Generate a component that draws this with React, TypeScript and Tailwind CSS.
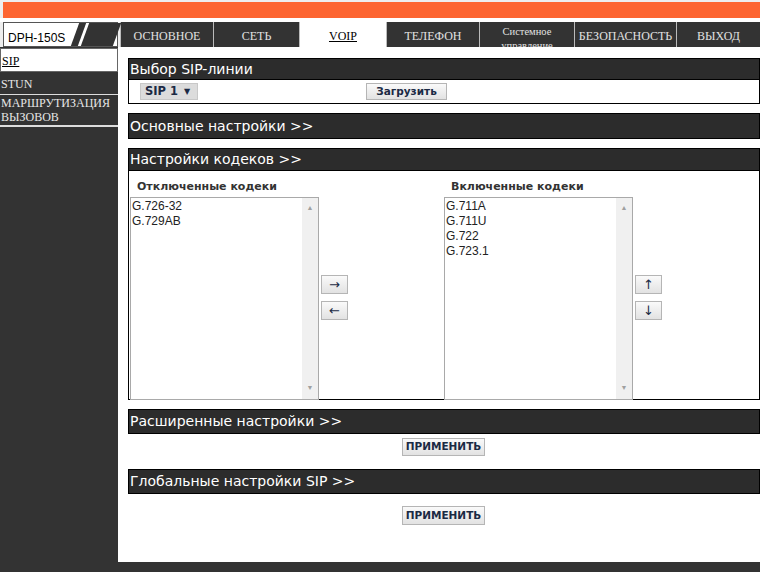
import React from "react";

const serif = "font-['Liberation_Serif',serif]";
const verdana = "font-['DejaVu_Sans',sans-serif]";
const arial = "font-['Liberation_Sans',Arial,sans-serif]";

const tabs = [
  { label: "ОСНОВНОЕ", w: "w-[93px]" },
  { label: "СЕТЬ", w: "w-[86px]" },
  { label: "VOIP", w: "w-[87px]", active: true },
  { label: "ТЕЛЕФОН", w: "w-[93px]" },
  { label: "Системное управление", w: "w-[95px]", small: true },
  { label: "БЕЗОПАСНОСТЬ", w: "w-[102px]" },
  { label: "ВЫХОД", w: "flex-1" },
];

function Header({ title, h = "h-[23px]" }: { title: string; h?: string }) {
  return (
    <div className={`${h} flex items-center border border-black bg-[#2c2c2c] pl-[1px] text-[14px] text-white ${verdana}`}>
      {title}
    </div>
  );
}

function GrayButton({ children, className = "" }: { children: React.ReactNode; className?: string }) {
  return (
    <button
      className={`flex items-center justify-center border border-[#b5b5b5] bg-gradient-to-b from-[#fafafa] to-[#e2e2e2] text-[10.5px] font-bold text-[#1b2a44] ${verdana} ${className}`}
    >
      {children}
    </button>
  );
}

function ListBox({ items }: { items: string[] }) {
  return (
    <div className="flex h-[203px] w-[189px] border border-[#a9a9a9] bg-white">
      <div className={`flex-1 pl-[1px] pt-[1px] text-[12px] leading-[15px] text-[#222] ${arial}`}>
        {items.map((c) => (
          <div key={c}>{c}</div>
        ))}
      </div>
      <div className="flex w-[16px] flex-col items-center justify-between bg-[#f0f0f0] py-[5px] text-[7px] text-[#a0a0a0]">
        <span>▲</span>
        <span>▼</span>
      </div>
    </div>
  );
}

function ArrowPair({ a, b }: { a: string; b: string }) {
  return (
    <div className="flex flex-col gap-[7px] pt-[104px]">
      <GrayButton className="h-[19px] w-[27px] !text-[13px] !font-normal">{a}</GrayButton>
      <GrayButton className="h-[19px] w-[27px] !text-[13px] !font-normal">{b}</GrayButton>
    </div>
  );
}

export default function App() {
  return (
    <div className="relative flex h-[572px] w-[760px] flex-col overflow-hidden bg-[#eeeeee]">
      <div className="ml-[3px] mt-[2px] h-[16px] bg-[#fd6531]" />
      <div className="h-[4px] bg-white" />
      <div className="flex h-[25px]">
        <div className="ml-[3px] flex w-[115px] border border-[#555] bg-white">
          <span className={`pl-[4px] pt-[6px] text-[12px] text-black ${arial}`}>DPH-150S</span>
          <div className="ml-[10px] w-[7px] -skew-x-[20deg] bg-[#333]" />
          <div className="ml-[3px] flex-1 -skew-x-[20deg] bg-[#333]" />
        </div>
        <div className="ml-[2px] flex flex-1">
          {tabs.map((t) => (
            <div
              key={t.label}
              className={`${t.w} flex items-center justify-center border-l border-[#bbb] ${serif} ${
                t.active ? "bg-white text-black underline" : "bg-[#333] text-[#e2e2e2]"
              } ${t.small ? "h-[25px] overflow-hidden pt-[9px] text-center text-[10.5px] leading-[14px]" : "pt-[2px] text-[12px]"}`}
            >
              {t.label}
            </div>
          ))}
        </div>
      </div>
      <div className="flex flex-1">
        <div className={`flex w-[118px] flex-col bg-[#333] ${serif} text-[12px]`}>
          <div className="mt-[1px] h-[24px] border border-[#666] bg-white pl-[1px] pt-[3px] text-black underline">SIP</div>
          <div className="h-[23px] border-b border-[#ddd] pl-[1px] pt-[3px] text-[#e6e6e6]">STUN</div>
          <div className="border-b-2 border-[#ddd] pb-[1px] pl-[1px] pt-[1px] leading-[14px] text-[#e6e6e6]">
            МАРШРУТИЗАЦИЯ
            <br />
            ВЫЗОВОВ
          </div>
        </div>
        <div className="flex flex-1 flex-col bg-white pl-[10px] pt-[11px]">
          <Header title="Выбор SIP-линии" h="h-[22px]" />
          <div className="flex h-[24px] items-center border border-t-0 border-black pl-[11px]">
            <div className={`flex h-[17px] w-[58px] items-center gap-[6px] border border-[#c8c8c8] bg-[#dcdcdc] pl-[4px] text-[11.5px] font-bold text-[#1b2a44] ${verdana}`}>
              SIP 1 <span className="text-[8px]">▼</span>
            </div>
            <GrayButton className="ml-[168px] h-[17px] w-[81px]">Загрузить</GrayButton>
          </div>
          <div className="mt-[9px]">
            <Header title="Основные настройки >>" h="h-[26px]" />
          </div>
          <div className="mt-[9px]">
            <Header title="Настройки кодеков >>" />
          </div>
          <div className="flex h-[229px] border border-t-0 border-black pl-[1px]">
            <div className="flex flex-col">
              <div className={`pl-[7px] pt-[8px] text-[11px] font-bold text-[#333] ${verdana}`}>Отключенные кодеки</div>
              <div className="mt-[1px]">
                <ListBox items={["G.726-32", "G.729AB"]} />
              </div>
            </div>
            <div className="ml-[2px] w-[123px]">
              <ArrowPair a="→" b="←" />
            </div>
            <div className="flex flex-col">
              <div className={`pl-[7px] pt-[8px] text-[11px] font-bold text-[#333] ${verdana}`}>Включенные кодеки</div>
              <div className="mt-[1px]">
                <ListBox items={["G.711A", "G.711U", "G.722", "G.723.1"]} />
              </div>
            </div>
            <div className="ml-[2px]">
              <ArrowPair a="↑" b="↓" />
            </div>
          </div>
          <div className="mt-[9px]">
            <Header title="Расширенные настройки >>" h="h-[25px]" />
          </div>
          <div className="flex justify-center pr-[1px] pt-[4px]">
            <GrayButton className="h-[18px] w-[83px]">ПРИМЕНИТЬ</GrayButton>
          </div>
          <div className="mt-[13px]">
            <Header title="Глобальные настройки SIP >>" h="h-[25px]" />
          </div>
          <div className="flex justify-center pr-[1px] pt-[12px]">
            <GrayButton className="h-[19px] w-[83px]">ПРИМЕНИТЬ</GrayButton>
          </div>
        </div>
      </div>
      <div className="h-[10px] bg-[#333]" />
    </div>
  );
}
